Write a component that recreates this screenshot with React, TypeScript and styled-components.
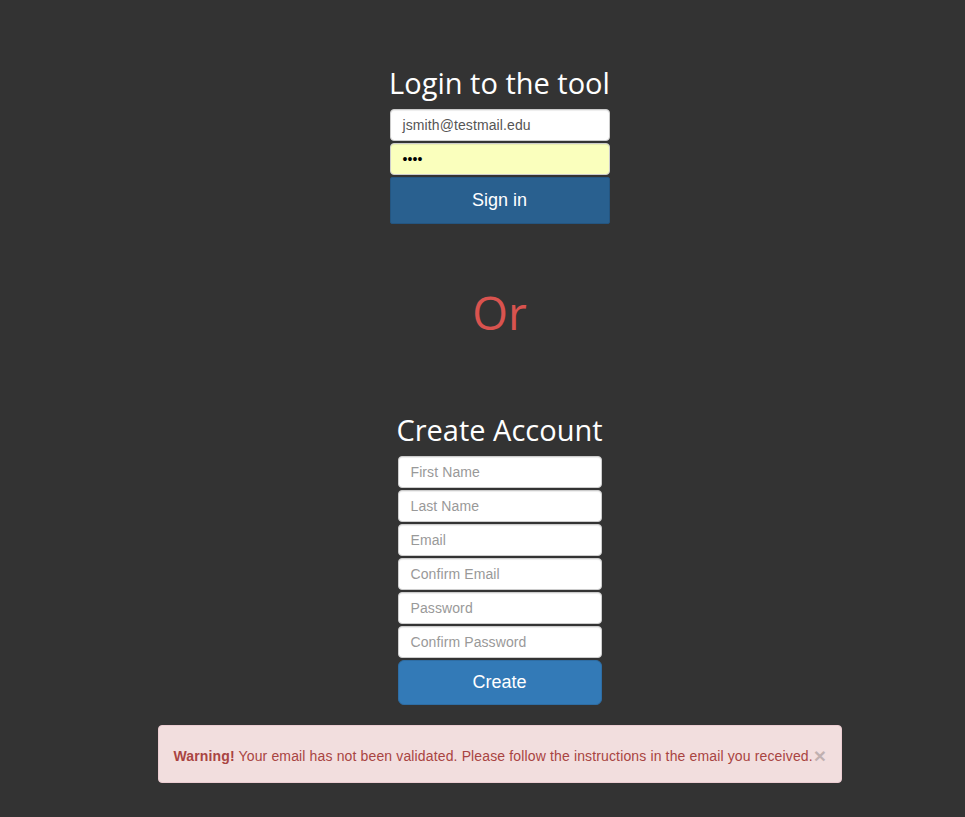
import React from "react";
import styled, { createGlobalStyle } from "styled-components";

const Global = createGlobalStyle`
  html, body { margin: 0; padding: 0; background: #333333; }
  body { font-family: "Liberation Sans", Arial, sans-serif; }
  * { box-sizing: border-box; }
`;

const Page = styled.div`
  min-height: 817px;
  padding-left: 34px;
  padding-top: 62px;
  display: flex;
  flex-direction: column;
  align-items: center;
`;

const Title = styled.h2`
  margin: 0;
  font-family: "Open Sans", sans-serif;
  font-weight: 400;
  font-size: 29px;
  line-height: 42px;
  color: #ffffff;
  text-align: center;
`;

const Form = styled.div<{ $w: number }>`
  width: ${(p) => p.$w}px;
  display: flex;
  flex-direction: column;
  gap: 2px;
  margin-top: 5px;
`;

const Input = styled.div<{ $filled?: boolean; $auto?: boolean }>`
  height: 32px;
  border: 1px solid #cccccc;
  border-radius: 4px;
  background: ${(p) => (p.$auto ? "#faffbd" : "#ffffff")};
  box-shadow: inset 0 1px 1px rgba(0, 0, 0, 0.075);
  padding: 0 12px;
  display: flex;
  align-items: center;
  font-size: 14px;
  letter-spacing: 0.1px;
  color: ${(p) => (p.$filled ? "#555555" : "#999999")};
`;

const Dots = styled.span`
  color: #000;
  font-size: 14px;
`;

const Button = styled.button<{ $dark?: boolean }>`
  height: ${(p) => (p.$dark ? 47 : 45)}px;
  border: 1px solid ${(p) => (p.$dark ? "#245580" : "#2e6da4")};
  border-radius: ${(p) => (p.$dark ? 2 : 6)}px;
  background: ${(p) => (p.$dark ? "#29608f" : "#337ab7")};
  color: #ffffff;
  font-family: "Liberation Sans", Arial, sans-serif;
  font-size: 18px;
  padding: 0;
`;

const Or = styled.div`
  margin-top: 62px;
  font-family: "Open Sans", sans-serif;
  font-size: 46px;
  line-height: 52px;
  color: #d9534f;
  text-align: center;
`;

const SecondTitle = styled(Title)`
  margin-top: 71px;
`;

const Alert = styled.div`
  margin-top: 20px;
  width: 684px;
  height: 58px;
  background: #f2dede;
  border: 1px solid #ebccd1;
  border-radius: 4px;
  color: #a94442;
  font-size: 14px;
  padding: 3px 15px 0;
  display: flex;
  align-items: center;
`;

const AlertText = styled.span`
  white-space: nowrap;
  letter-spacing: 0.14px;
`;

const Close = styled.span`
  flex-shrink: 0;
  margin-left: 1px;
  font-size: 21px;
  font-weight: 700;
  color: #000;
  opacity: 0.2;
  line-height: 1;
`;

export default function App() {
  return (
    <>
      <Global />
      <Page>
        <Title>Login to the tool</Title>
        <Form $w={220}>
          <Input $filled>jsmith@testmail.edu</Input>
          <Input $auto>
            <Dots>••••</Dots>
          </Input>
          <Button $dark>Sign in</Button>
        </Form>
        <Or>Or</Or>
        <SecondTitle>Create Account</SecondTitle>
        <Form $w={204}>
          <Input>First Name</Input>
          <Input>Last Name</Input>
          <Input>Email</Input>
          <Input>Confirm Email</Input>
          <Input>Password</Input>
          <Input>Confirm Password</Input>
          <Button>Create</Button>
        </Form>
        <Alert>
          <AlertText>
            <b>Warning!</b> Your email has not been validated. Please follow the instructions in the email you received.
          </AlertText>
          <Close>×</Close>
        </Alert>
      </Page>
    </>
  );
}
